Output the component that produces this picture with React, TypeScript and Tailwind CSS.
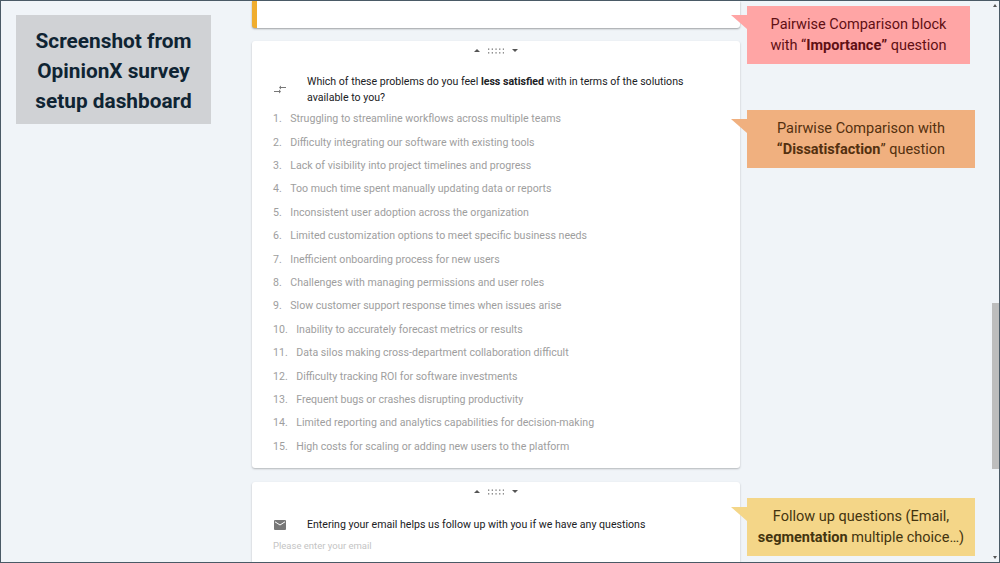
const PROBLEMS = [
  "Struggling to streamline workflows across multiple teams",
  "Difficulty integrating our software with existing tools",
  "Lack of visibility into project timelines and progress",
  "Too much time spent manually updating data or reports",
  "Inconsistent user adoption across the organization",
  "Limited customization options to meet specific business needs",
  "Inefficient onboarding process for new users",
  "Challenges with managing permissions and user roles",
  "Slow customer support response times when issues arise",
  "Inability to accurately forecast metrics or results",
  "Data silos making cross-department collaboration difficult",
  "Difficulty tracking ROI for software investments",
  "Frequent bugs or crashes disrupting productivity",
  "Limited reporting and analytics capabilities for decision-making",
  "High costs for scaling or adding new users to the platform",
];

// Up arrow, grip dots, down arrow at the top of each block
function DragHandle() {
  return (
    <div className="flex h-[17px] items-center justify-center gap-[8px]">
      <span className="h-0 w-0 border-x-[3px] border-b-[3px] border-x-transparent border-b-[#555]" />
      <svg width="16" height="6" viewBox="0 0 16 6" fill="#777">
        {[0, 3.7, 7.4, 11.1, 14.8].map((x) => (
          <g key={x}>
            <rect x={x} y="0.5" width="1.3" height="1.3" />
            <rect x={x} y="4.2" width="1.3" height="1.3" />
          </g>
        ))}
      </svg>
      <span className="h-0 w-0 border-x-[3.5px] border-t-[3.5px] border-x-transparent border-t-[#555]" />
    </div>
  );
}

function Callout({
  className,
  children,
}: {
  className: string;
  children: React.ReactNode;
}) {
  return (
    <div className={`relative h-[58px] px-2 pt-[8px] text-center text-[14.5px] leading-[21px] ${className}`}>
      {children}
    </div>
  );
}

function Tail({ color }: { color: string }) {
  return (
    <svg className="absolute left-[-16px] top-[9px]" width="16" height="14" viewBox="0 0 16 14" fill={color}>
      <path d="M0 0H16V14Z" />
    </svg>
  );
}

export default function App() {
  return (
    <div
      className="flex h-[563px] w-[1000px] overflow-hidden border border-[#4a5a66] bg-[#f0f4f8] text-[#202124]"
      style={{ fontFamily: "Roboto, sans-serif" }}
    >
      {/* Left note */}
      <div className="w-[251px] shrink-0 pl-[15px] pt-[14px]">
        <div className="flex h-[109px] w-[195px] flex-col justify-center bg-[#d0d2d5] pt-[3px] text-center text-[20.8px] font-bold leading-[30px] text-[#0f2433]">
          <div>Screenshot from</div>
          <div>OpinionX survey</div>
          <div>setup dashboard</div>
        </div>
      </div>

      {/* Survey blocks */}
      <div className="flex w-[488px] shrink-0 flex-col">
        <div className="h-[27px] shrink-0 rounded-b-[3px] border-l-[5px] border-[#f0ad2e] bg-white shadow-[0_1px_2px_rgba(0,0,0,0.35)]" />

        <div className="mt-[13px] h-[427px] shrink-0 rounded-[3px] bg-white pt-[1px] shadow-[0_1px_2px_rgba(0,0,0,0.25)]">
          <DragHandle />
          <div className="mt-[15px] flex items-center pl-[22px]">
            <svg className="shrink-0" width="12" height="9" viewBox="0 0 12 9" fill="#777" stroke="none">
              <path d="M7 2H12V3H7ZM7 0.5V4.5L5 2.5Z" />
              <path d="M0 6H5V7H0ZM5 4.5V8.5L7 6.5Z" />
            </svg>
            <p className="ml-[21px] w-[410px] text-[10.6px] leading-[15.5px]">
              Which of these problems do you feel <b className="font-bold">less satisfied</b> with in terms of the
              solutions available to you?
            </p>
          </div>
          <ol className="mt-[2.5px] pl-[21px] text-[10.6px] text-[#9e9e9e]">
            {PROBLEMS.map((text, i) => (
              <li key={text} className="flex h-[23.4px] items-center">
                <span className="mr-[8.5px]">{i + 1}.</span>
                <span>{text}</span>
              </li>
            ))}
          </ol>
        </div>

        <div className="mt-[14px] flex-1 rounded-t-[3px] bg-white pt-[1px] shadow-[0_1px_2px_rgba(0,0,0,0.25)]">
          <DragHandle />
          <div className="mt-[17px] flex items-center pl-[22px]">
            <svg className="shrink-0" width="12" height="10" viewBox="0 0 12 10">
              <rect width="12" height="10" rx="1" fill="#777" />
              <path d="M1 1.8L6 5L11 1.8" fill="none" stroke="#fff" strokeWidth="1" />
            </svg>
            <p className="ml-[21px] text-[10.6px] leading-[15px]">
              Entering your email helps us follow up with you if we have any questions
            </p>
          </div>
          <p className="mt-[7px] pl-[21px] text-[9.5px] leading-[13px] text-[#c4c4c4]">Please enter your email</p>
        </div>
      </div>

      {/* Annotations */}
      <div className="ml-[7px] flex w-[228px] shrink-0 flex-col pt-[5px]">
        <Callout className="w-[223px] bg-[#ffa5a5] text-[#5f0f14]">
          <Tail color="#ffa5a5" />
          Pairwise Comparison block
          <br />
          with “<b className="font-bold">Importance”</b> question
        </Callout>
        <Callout className="mt-[46px] bg-[#f0b07f] text-[#54300f]">
          <Tail color="#f0b07f" />
          Pairwise Comparison with
          <br />
          <b className="font-bold">“Dissatisfaction</b>” question
        </Callout>
        <Callout className="mt-[330px] bg-[#f4d688] text-[#43340f]">
          <Tail color="#f4d688" />
          Follow up questions (Email,
          <br />
          <b className="font-bold">segmentation</b> multiple choice…)
        </Callout>
      </div>

      {/* Scrollbar */}
      <div className="ml-auto flex w-[8px] shrink-0 flex-col items-center justify-between py-[3px]">
        <span className="h-0 w-0 border-x-[2.5px] border-b-[3px] border-x-transparent border-b-[#555]" />
        <div className="mt-[296px] h-[166px] w-[7px] bg-[#bdbdbd]" />
        <span className="mt-auto h-0 w-0 border-x-[2.5px] border-t-[3px] border-x-transparent border-t-[#555]" />
      </div>
    </div>
  );
}
